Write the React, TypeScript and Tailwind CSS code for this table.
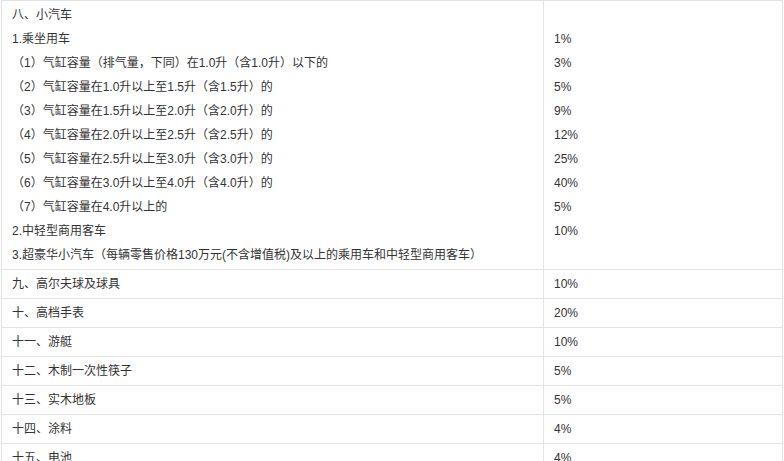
import React from 'react';

const carLines = [
  '八、小汽车',
  '1.乘坐用车',
  '（1）气缸容量（排气量，下同）在1.0升（含1.0升）以下的',
  '（2）气缸容量在1.0升以上至1.5升（含1.5升）的',
  '（3）气缸容量在1.5升以上至2.0升（含2.0升）的',
  '（4）气缸容量在2.0升以上至2.5升（含2.5升）的',
  '（5）气缸容量在2.5升以上至3.0升（含3.0升）的',
  '（6）气缸容量在3.0升以上至4.0升（含4.0升）的',
  '（7）气缸容量在4.0升以上的',
  '2.中轻型商用客车',
  '3.超豪华小汽车（每辆零售价格130万元(不含增值税)及以上的乘用车和中轻型商用客车）',
];

const carRates = ['', '1%', '3%', '5%', '9%', '12%', '25%', '40%', '5%', '10%', ''];

const rows = [
  ['九、高尔夫球及球具', '10%'],
  ['十、高档手表', '20%'],
  ['十一、游艇', '10%'],
  ['十二、木制一次性筷子', '5%'],
  ['十三、实木地板', '5%'],
  ['十四、涂料', '4%'],
  ['十五、电池', '4%'],
];

const App = () => {
  return (
    <div className="w-[784px] h-[461px] overflow-hidden bg-white">
      <table
        className="ml-px w-[782px] table-fixed border-collapse border border-[#e3e3e3] text-[12px] leading-6 text-[#333]"
        style={{ fontFamily: '"Liberation Sans", Arial, "Noto Sans CJK SC", sans-serif' }}
      >
        <colgroup>
          <col className="w-[542px]" />
          <col />
        </colgroup>
        <tbody>
          <tr>
            <td className="border border-[#e3e3e3] px-2.5 py-[2px] align-top whitespace-nowrap">
              {carLines.map((l, i) => (
                <div key={i} className="h-6">{l}</div>
              ))}
            </td>
            <td className="border border-[#e3e3e3] px-2.5 py-[2px] align-top">
              {carRates.map((r, i) => (
                <div key={i} className="h-6">{r}</div>
              ))}
            </td>
          </tr>
          {rows.map(([name, rate]) => (
            <tr key={name}>
              <td className="border border-[#e3e3e3] px-2.5 py-[2px]">{name}</td>
              <td className="border border-[#e3e3e3] px-2.5 py-[2px]">{rate}</td>
            </tr>
          ))}
        </tbody>
      </table>
    </div>
  );
};

export default App;
